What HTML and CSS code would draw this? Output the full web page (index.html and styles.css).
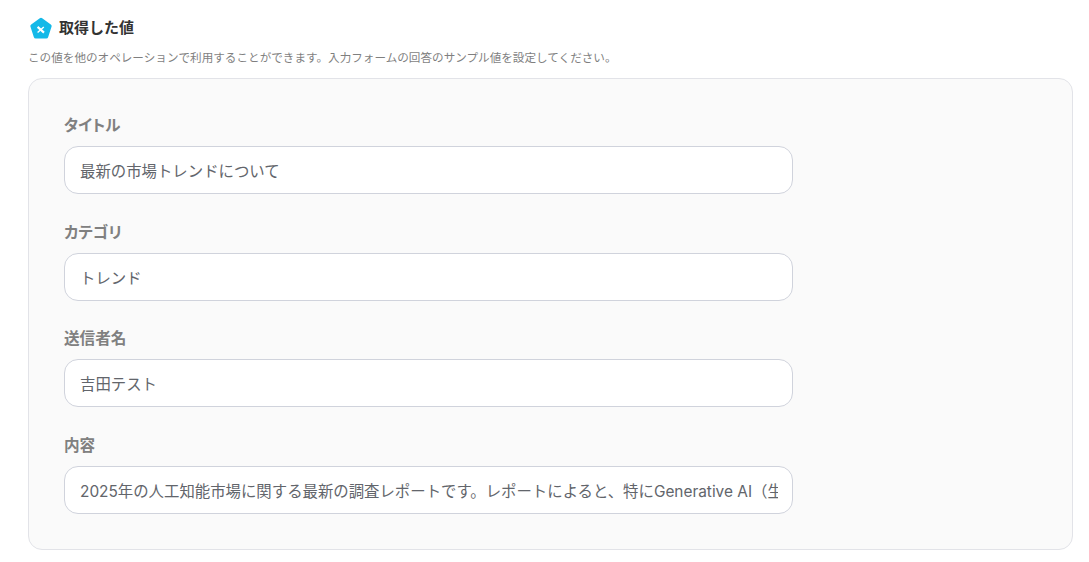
FILE: index.html
```html
<!DOCTYPE html>
<html lang="ja">
<head>
    <meta charset="UTF-8">
    <meta name="viewport" content="width=device-width, initial-scale=1.0">
    <title>取得した値</title>
    <link rel="stylesheet" href="styles.css">
</head>
<body>
    <div class="section-title">
        <svg class="section-icon" width="24" height="24" viewBox="0 0 24 24">
            <path d="M10.8 2.2 Q12 1.4 13.2 2.2 L21.8 8.4 Q23 9.3 22.6 10.6 L19.2 20.9 Q18.8 22.6 17.2 22.6 L6.8 22.6 Q5.2 22.6 4.8 20.9 L1.4 10.6 Q1 9.3 2.2 8.4 Z" fill="#14b9e8"/>
            <path d="M8.6 10.9 L15 16.6" stroke="#fff" stroke-width="2.2" fill="none"/>
            <path d="M14.8 10.9 L8.6 16.6" stroke="#fff" stroke-width="1.4" fill="none"/>
        </svg>
        <h2>取得した値</h2>
    </div>
    <p class="section-note">この値を他のオペレーションで利用することができます。入力フォームの回答のサンプル値を設定してください。</p>
    <div class="panel">
        <div class="field">
            <label for="f-title">タイトル</label>
            <input id="f-title" type="text" value="最新の市場トレンドについて">
        </div>
        <div class="field">
            <label for="f-category">カテゴリ</label>
            <input id="f-category" type="text" value="トレンド">
        </div>
        <div class="field">
            <label for="f-sender">送信者名</label>
            <input id="f-sender" type="text" value="吉田テスト">
        </div>
        <div class="field">
            <label for="f-body">内容</label>
            <input id="f-body" type="text" value="2025年の人工知能市場に関する最新の調査レポートです。レポートによると、特にGenerative AI（生成AI）の分野が急成長しています。">
        </div>
    </div>
</body>
</html>
```

FILE: styles.css
```css
body {
    font-family: Inter, "Noto Sans CJK JP", sans-serif;
    background-color: #ffffff;
    margin: 0;
    padding: 16px 16px 12px 28px;
    overflow: hidden;
}

.section-title {
    display: flex;
    align-items: center;
    gap: 6px;
    margin-left: 1px;
    height: 24px;
}

.section-icon {
    flex: none;
}

h2 {
    margin: 0 0 3px;
    font-size: 15px;
    font-weight: 700;
    color: #333333;
}

.section-note {
    margin: 10px 0 12px;
    font-size: 11.6px;
    line-height: 16px;
    color: #7f7f7f;
}

.panel {
    box-sizing: border-box;
    height: 472px;
    padding: 36px 35px 35px;
    background-color: #fafafa;
    border: 1px solid #e2e3e8;
    border-radius: 14px;
}

.field {
    margin-bottom: 27.67px;
}

.field:last-child {
    margin-bottom: 0;
}

label {
    display: block;
    margin-bottom: 9px;
    font-size: 15.6px;
    font-feature-settings: "palt";
    line-height: 22px;
    font-weight: 700;
    color: #808080;
}

input[type="text"] {
    box-sizing: border-box;
    display: block;
    width: 729px;
    height: 48px;
    padding: 0 14px 0 15px;
    font-family: inherit;
    font-size: 15.4px;
    color: #62656b;
    background-color: #ffffff;
    border: 1px solid #d0d3dc;
    border-radius: 14px;
    outline: none;
}
```
